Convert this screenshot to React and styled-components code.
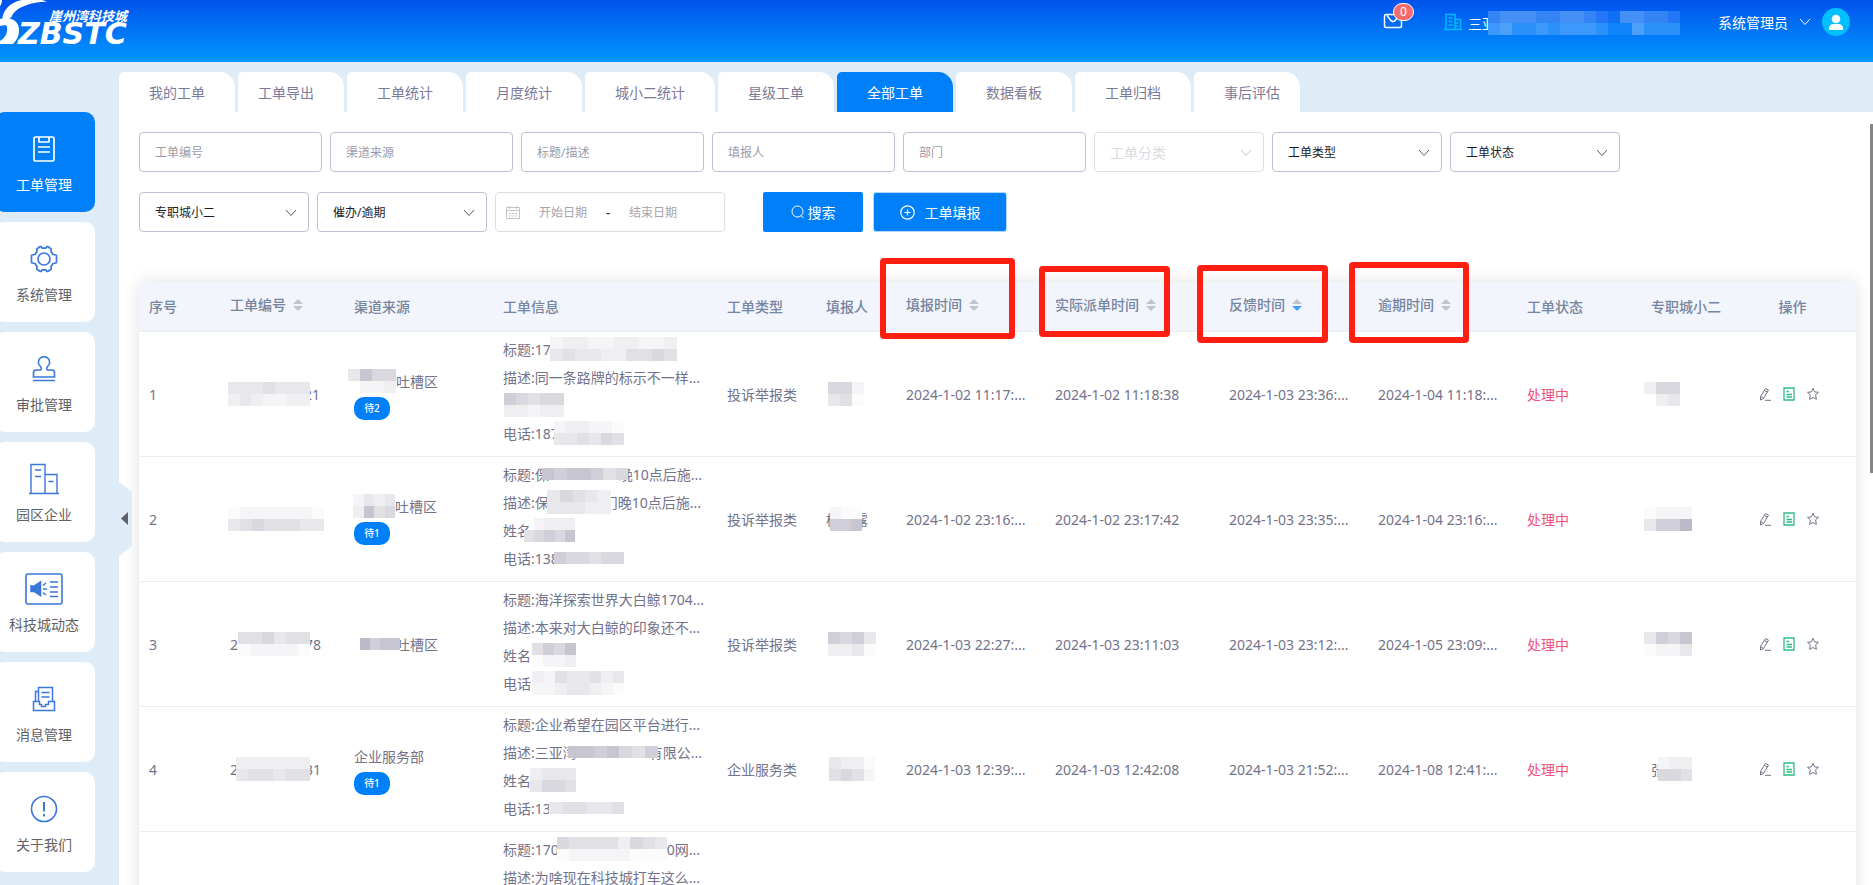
import React from 'react';
import styled, { createGlobalStyle } from 'styled-components';

const tabs = [
  { label: '我的工单' },
  { label: '工单导出', left: 20 },
  { label: '工单统计' },
  { label: '月度统计' },
  { label: '城小二统计' },
  { label: '星级工单' },
  { label: '全部工单', active: true },
  { label: '数据看板' },
  { label: '工单归档' },
  { label: '事后评估', right: 20 },
];

const columns = [
  { label: '序号', width: 81 },
  { label: '工单编号', width: 124, sortable: true },
  { label: '渠道来源', width: 149 },
  { label: '工单信息', width: 224 },
  { label: '工单类型', width: 99 },
  { label: '填报人', width: 80 },
  { label: '填报时间', width: 149, sortable: true, mark: { top: -24, left: -16, width: 135, height: 81 } },
  { label: '实际派单时间', width: 174, sortable: true, mark: { top: -16, left: -6, width: 131, height: 71 } },
  { label: '反馈时间', width: 149, sortable: true, sorted: true, mark: { top: -17, left: -22, width: 131, height: 78 } },
  { label: '逾期时间', width: 149, sortable: true, mark: { top: -20, left: -19, width: 120, height: 81 } },
  { label: '工单状态', width: 124 },
  { label: '专职城小二', width: 88 },
  { label: '操作', width: 127, center: true },
];

// light to dark, indexed by the digits used in the mosaic rows
const greys = ['#fbfbfc', '#f5f5f7', '#efeff2', '#e8e8ec', '#e0e0e5', '#d8d8de', '#d0cfd9', '#c6c5d0', '#bab9c8'];

const m = (width, rows, before = 0, after = 0) => ({ width, rows, before, after });

const orders = [
  {
    id: 1,
    code: [m(82, ['3334333', '2321122'], -2, -6), '21'],
    channel: [m(48, ['3755', '.112'], -6), '吐槽区'],
    waiting: 2,
    info: [
      ['标题:173', m(127, ['1221122112', '3433224454'], -9)],
      ['描述:同一条路牌的标示不一样...'],
      [m(60, ['65455', '22122'], 1)],
      ['电话:187', m(70, ['122110', '334354'], -5)],
    ],
    type: '投诉举报类',
    reporter: [m(36, ['551', '340'], 2)],
    times: ['2024-1-02 11:17:...', '2024-1-02 11:18:38', '2024-1-03 23:36:...', '2024-1-04 11:18:...'],
    owner: [m(36, ['255', '.23'], -7)],
  },
  {
    id: 2,
    code: [m(96, ['01111110', '34544433'], -2)],
    channel: [m(42, ['1323', '2745'], -1), '吐槽区'],
    waiting: 1,
    info: [
      ['标题:保', m(86, ['7677645'], -7, -9), '晚10点后施...'],
      ['描述:保', m(64, ['35432', '33322'], -2, -7), '门晚10点后施...'],
      ['姓名', m(51, ['.1222', '45657'], -7)],
      ['电话:138', m(70, ['655455'], -5)],
    ],
    type: '投诉举报类',
    reporter: ['杨', m(32, ['100', '667'], -10, -8), '露'],
    times: ['2024-1-02 23:16:...', '2024-1-02 23:17:42', '2024-1-03 23:35:...', '2024-1-04 23:16:...'],
    owner: [m(48, ['0111', '3668'], -7)],
  },
  {
    id: 3,
    code: ['2', m(72, ['445344', '011110'], 0, -5), '78'],
    channel: [m(40, ['8677'], 6, -4), '吐槽区'],
    info: [
      ['标题:海洋探索世界大白鲸1704...'],
      ['描述:本来对大白鲸的印象还不...'],
      ['姓名', m(44, ['4657', '0112'], 1)],
      ['电话', m(92, ['21433423', '11233210'], 1)],
    ],
    type: '投诉举报类',
    reporter: [m(48, ['6563', '2230'], 2)],
    times: ['2024-1-03 22:27:...', '2024-1-03 23:11:03', '2024-1-03 23:12:...', '2024-1-05 23:09:...'],
    owner: [m(48, ['3657', '0113'], -7)],
  },
  {
    id: 4,
    code: ['2', m(74, ['222222', '344344'], -2, -5), '31'],
    channel: ['企业服务部'],
    waiting: 1,
    info: [
      ['标题:企业希望在园区平台进行...'],
      ['描述:三亚湾', m(90, ['7767546'], -9, -9), '有限公...'],
      ['姓名', m(46, ['2333', '3554'], -1)],
      ['电话:13', m(75, ['344334'], -2)],
    ],
    type: '企业服务类',
    reporter: [m(46, ['3220', '4541'], 3)],
    times: ['2024-1-03 12:39:...', '2024-1-03 12:42:08', '2024-1-03 21:52:...', '2024-1-08 12:41:...'],
    owner: ['张', m(34, ['122', '554'], -7)],
  },
  {
    id: 5,
    code: [],
    channel: [],
    info: [
      ['标题:170', m(110, ['544442543', '011111000'], -2), '0网...'],
      ['描述:为啥现在科技城打车这么...'],
    ],
    type: '',
    reporter: [],
    times: ['', '', '', ''],
    owner: [],
  },
];

const Mosaic = ({ width, rows, before = 0, after = 0, palette = greys }) => (
  <MosaicSvg
    $before={before}
    $after={after}
    width={width}
    height={rows.length * 12}
    viewBox={`0 0 ${rows[0].length} ${rows.length}`}
    preserveAspectRatio="none"
    shapeRendering="crispEdges"
    aria-hidden="true"
  >
    {rows.map((row, y) => row.split('').map((tone, x) => (
      tone === '.' ? null : <rect key={`${x}-${y}`} x={x} y={y} width="1" height="1" fill={palette[tone]} />
    )))}
  </MosaicSvg>
);

const Parts = ({ items }) => items.map((item, i) => (
  typeof item === 'string' ? <span key={i}>{item}</span> : <Mosaic key={i} {...item} />
));

const Chevron = () => (
  <svg width="12" height="8" viewBox="0 0 12 8" fill="none" stroke="currentColor">
    <path d="M1 1l5 5.5L11 1" />
  </svg>
);

const menu = [
  {
    label: '工单管理',
    active: true,
    icon: (
      <svg width="24" height="28" viewBox="0 0 24 28" strokeWidth="1.7">
        <rect x="2" y="2" width="20" height="24" rx="1.5" />
        <path d="M7 2v5h10V2M6 12h12M6 17h12" />
      </svg>
    ),
  },
  {
    label: '系统管理',
    icon: (
      <svg width="28" height="28" viewBox="0 0 28 28" strokeWidth="1.7">
        <path d="M10 1.200h1.200l1 1.500h3.600l1-1.500H18l3.200 2.200-.2 2.600 1.800 2.800 3.700 1v7.400l-3.700 1L21 21l.2 2.600L18 25.800h-1.200l-1-1.500h-3.600l-1 1.500H10l-3.200-2.200L7 21l-1.800-2.800-3.700-1V9.800l3.700-1L7 6l-.2-2.600z" transform="translate(0 .5)" />
        <circle cx="14" cy="14" r="6" />
      </svg>
    ),
  },
  {
    label: '审批管理',
    icon: (
      <svg width="24" height="26" viewBox="0 0 24 26" strokeWidth="1.6">
        <path d="M1.500 21v-4.500c0-1.500 1-2.500 2.500-2.500h4c1.600 0 1.500-2 .6-3.300a5.600 5.600 0 1 1 6.800 0c-.9 1.300-1 3.300.6 3.300h4c1.500 0 2.500 1 2.500 2.500V21zM1 24.500h22" />
      </svg>
    ),
  },
  {
    label: '园区企业',
    icon: (
      <svg width="32" height="32" viewBox="0 0 32 32" strokeWidth="1.4">
        <path d="M1 30.500h30M3 30V1.500h14V30M17 11.500h12V30M7 7h6M7 13.500h6M20.500 18.500h5" />
      </svg>
    ),
  },
  {
    label: '科技城动态',
    icon: (
      <svg width="38" height="32" viewBox="0 0 38 32" strokeWidth="1.6">
        <rect x="1" y="1" width="36" height="30" rx="2" />
        <path d="M6 13h3.500L15.500 9v13.500l-6-4H6z" fill="currentColor" />
        <path d="M18 12.500l3-2.500M18 16h4M18 19.500l3 2.500M25 9h8M25 14h8M25 19h8M25 23.500h8" />
      </svg>
    ),
  },
  {
    label: '消息管理',
    icon: (
      <svg width="24" height="28" viewBox="0 0 24 28" strokeWidth="1.5">
        <path d="M1.500 16.500v9h21v-9h-6v3h-3v2h-4v-2h-2v-3zM3.500 16V6.500H6M6.500 16V2.500h14V16M9.500 7.500h8M9.500 12h8" />
      </svg>
    ),
  },
  {
    label: '关于我们',
    icon: (
      <svg width="28" height="28" viewBox="0 0 28 28" strokeWidth="1.6">
        <circle cx="14" cy="14" r="12.5" />
        <path d="M14 7v9.500M14 19v2.500" strokeWidth="2" />
      </svg>
    ),
  },
];

const TextFilter = ({ label }) => <FilterInput type="text" placeholder={label} aria-label={label} />;

const SelectFilter = ({ label, disabled }) => (
  <SelectBox $disabled={disabled}>
    <FilterSelect aria-label={label} disabled={disabled}>
      <option>{label}</option>
    </FilterSelect>
    <Chevron />
  </SelectBox>
);

const HeaderCell = ({ column }) => (
  <Th $center={column.center} $sortable={column.sortable} scope="col">
    {column.sortable ? (
      <SortButton type="button">
        {column.label}
        <svg width="10" height="12" viewBox="0 0 10 12" aria-hidden="true">
          <path d="M0 5L5 0l5 5z" fill="#c0c4cc" />
          <path d="M0 7h10l-5 5z" fill={column.sorted ? '#409eff' : '#c0c4cc'} />
        </svg>
      </SortButton>
    ) : column.label}
    {column.mark && <Mark $box={column.mark} />}
  </Th>
);

const OrderRow = ({ order }) => (
  <tr>
    <Td>{order.id}</Td>
    <Td><Line><Parts items={order.code} /></Line></Td>
    <Td>
      <Line $short><Parts items={order.channel} /></Line>
      {order.waiting && <Pill>{`待${order.waiting}`}</Pill>}
    </Td>
    <InfoTd>
      {order.info.map((items, i) => <Line key={i}><Parts items={items} /></Line>)}
    </InfoTd>
    <Td>{order.type}</Td>
    <Td><Line><Parts items={order.reporter} /></Line></Td>
    {order.times.map((time, i) => <Td key={i}>{time}</Td>)}
    <Td $danger>{order.type && '处理中'}</Td>
    <Td><Line><Parts items={order.owner} /></Line></Td>
    <Td>
      <Actions>
        <IconButton type="button" aria-label="编辑">
          <svg width="12" height="14" viewBox="0 0 12 14" fill="none" stroke="currentColor">
            <path d="M6.500 1.500L9.500 3l-5 8.500L1.500 13V9.500zM5.500 3.500l3 1.600M1.500 9.500l3 2M6 13.300h6" />
          </svg>
        </IconButton>
        <IconButton type="button" aria-label="详情" $green>
          <svg width="12" height="14" viewBox="0 0 12 14" fill="none" stroke="currentColor" strokeWidth="1.3">
            <path d="M1 1h10v12H1zM3.500 4.500H6M3.500 7.500h5.500M3.500 10h5.500" />
          </svg>
        </IconButton>
        <IconButton type="button" aria-label="收藏">
          <svg width="12" height="14" viewBox="0 0 12 14" fill="none" stroke="currentColor">
            <path d="M6 1.300l1.600 3.600 3.900.4-2.900 2.600.8 4.400L6 10.500l-3.400 1.800.8-4.400L.5 5.300l3.900-.4z" />
          </svg>
        </IconButton>
      </Actions>
    </Td>
  </tr>
);

const Logo = () => (
  <svg width="140" height="62" viewBox="0 0 140 62" fill="#fff" role="img" aria-label="崖州湾科技城 ZBSTC">
    <path d="M47 1.500C32 2 15 7 11.500 17C9 19 6 20 2.500 20C2 11 10 2 22 0h20z" />
    <path d="M0 6c1-1 2-3 2-6H0z" />
    <path d="M0 19c9-3 19 1 19 11 0 7-3 11-6 14H0v-3c5-3 8-8 7-14-1-3-4-1-7-1z" />
    <text x="49" y="21" fontSize="13" fontWeight="700" fontStyle="italic">崖州湾科技城</text>
    <text x="18" y="44" fontSize="30" fontWeight="700" fontStyle="italic" fontFamily="DejaVu Sans, sans-serif">ZBSTC</text>
  </svg>
);

const App = () => (
  <>
    <GlobalStyle />
    <Page>
      <TopBar>
        <Logo />
        <TopRight>
          <MailButton type="button" aria-label="消息">
            <svg width="20" height="16" viewBox="0 0 20 16" fill="none" stroke="currentColor" strokeWidth="1.5">
              <path d="M3 1.500h14q1.500 0 1.500 1.500v10q0 1.500-1.500 1.500H3q-1.500 0-1.500-1.500V3Q1.500 1.500 3 1.500zM4 2.500l4 5.200q2 1.600 4 0l4-5.200" />
            </svg>
            <Badge>0</Badge>
          </MailButton>
          <Company>
            <svg width="18" height="18" viewBox="0 0 18 18" fill="none" stroke="#00baff" strokeWidth="1.5">
              <path d="M0 16.500h18M2 16V1.500h9V16M11 6.500h5.500V16M4.500 5h4M4.500 8.500h4M4.500 12h4M11 10h3M11 13h3" />
            </svg>
            <CompanyName>
              三亚
              <Mosaic
                width={192}
                before={-8}
                palette={['#0f70f6', '#2278f8', '#3584f6', '#4590f6', '#0f84fa', '#2a90fa', '#3c98fa', '#4ca0fa']}
                rows={['2333223321033221', '6755656665447555']}
              />
            </CompanyName>
          </Company>
          <UserButton type="button">
            系统管理员
            <Chevron />
            <svg width="28" height="28" viewBox="0 0 28 28">
              <circle cx="14" cy="14" r="14" fill="#00bfff" />
              <circle cx="14" cy="11" r="4.3" fill="#fff" />
              <path d="M7 22v-1.500c0-3 2-4.500 4.500-4.500h5c2.500 0 4.500 1.500 4.500 4.500V22z" fill="#fff" />
            </svg>
          </UserButton>
        </TopRight>
      </TopBar>

      <Body>
        <SideNav>
          {menu.map((item) => (
            <SideLink href="#" key={item.label} $active={item.active}>
              <SideIcon>{item.icon}</SideIcon>
              {item.label}
            </SideLink>
          ))}
        </SideNav>

        <Main>
          <Tabs>
            {tabs.map((tab) => (
              <Tab type="button" key={tab.label} $active={tab.active} $left={tab.left} $right={tab.right}>
                {tab.label}
              </Tab>
            ))}
          </Tabs>

          <Panel>
            <CollapseButton type="button" aria-label="收起">
              <svg width="13" height="74" viewBox="0 0 13 74">
                <path d="M0 0l13 10v54L0 74z" fill="#deecf8" />
                <path d="M9 30v13l-7-6.500z" fill="#606266" />
              </svg>
            </CollapseButton>

            <Filters>
              <FilterRow>
                <TextFilter label="工单编号" />
                <TextFilter label="渠道来源" />
                <TextFilter label="标题/描述" />
                <TextFilter label="填报人" />
                <TextFilter label="部门" />
                <SelectFilter label="工单分类" disabled />
                <SelectFilter label="工单类型" />
                <SelectFilter label="工单状态" />
              </FilterRow>
              <FilterRow>
                <SelectFilter label="专职城小二" />
                <SelectFilter label="催办/逾期" />
                <DateRange>
                  <svg width="14" height="14" viewBox="0 0 14 14" fill="none" stroke="#c0c4cc">
                    <path d="M.5 2.500h13v11H.5zM.5 5.500h13M3.500 1v3M10.500 1v3M3 8.500h2M6 8.500h2M9 8.500h2M3 11h2M6 11h2M9 11h2" />
                  </svg>
                  <DateInput placeholder="开始日期" aria-label="开始日期" />
                  <span>-</span>
                  <DateInput placeholder="结束日期" aria-label="结束日期" />
                </DateRange>
                <Buttons>
                  <SearchButton type="submit">
                    <svg width="13" height="14" viewBox="0 0 13 14" fill="none" stroke="currentColor">
                      <circle cx="6.5" cy="6.5" r="5.5" />
                      <path d="M10 10.500l2.500 2.500" />
                    </svg>
                    搜索
                  </SearchButton>
                  <CreateButton type="button">
                    <svg width="15" height="15" viewBox="0 0 15 15" fill="none" stroke="currentColor" strokeWidth="1.2">
                      <circle cx="7.5" cy="7.5" r="6.7" />
                      <path d="M7.500 4.500v6M4.500 7.500h6" />
                    </svg>
                    工单填报
                  </CreateButton>
                </Buttons>
              </FilterRow>
            </Filters>

            <Table>
              <colgroup>
                {columns.map((column) => <col key={column.label} width={column.width} />)}
              </colgroup>
              <thead>
                <tr>
                  {columns.map((column) => <HeaderCell key={column.label} column={column} />)}
                </tr>
              </thead>
              <tbody>
                {orders.map((order) => <OrderRow key={order.id} order={order} />)}
              </tbody>
            </Table>
            <ScrollThumb />
          </Panel>
        </Main>
      </Body>
    </Page>
  </>
);

const GlobalStyle = createGlobalStyle`
  * {
    box-sizing: border-box;
  }

  body {
    margin: 0;
    background: #deecf8;
  }

  body, button, input, select {
    font-family: "Noto Sans", "Noto Sans CJK SC", sans-serif;
    font-size: 14px;
  }

  button {
    padding: 0;
    border: 0;
    background: none;
    color: inherit;
    cursor: pointer;
  }

  svg {
    flex: none;
  }
`;

const Page = styled.div`
  display: flex;
  flex-direction: column;
  height: 100vh;
  overflow: hidden;
`;

const TopBar = styled.header`
  display: flex;
  flex: none;
  justify-content: space-between;
  height: 62px;
  padding-right: 23px;
  background: linear-gradient(#0052ec, #0098ff);
  color: #fff;
`;

const TopRight = styled.div`
  display: flex;
  align-items: center;
  height: 46px;
`;

const MailButton = styled.button`
  position: relative;
  display: flex;
  margin-right: 41px;
  padding-bottom: 4px;
`;

const Badge = styled.span`
  position: absolute;
  top: -10px;
  left: 10px;
  width: 21px;
  height: 18px;
  border: 1px solid #fff;
  border-radius: 9px;
  background: #f56c6c;
  font-size: 12px;
  line-height: 16px;
  text-align: center;
`;

const Company = styled.div`
  display: flex;
  align-items: center;
  gap: 6px;
  margin-right: 38px;
  padding-bottom: 2px;
`;

const CompanyName = styled.span`
  display: flex;
  align-items: center;
  padding-top: 2px;
  white-space: nowrap;
`;

const UserButton = styled.button`
  display: flex;
  align-items: center;
  gap: 11px;
  padding-bottom: 2px;
`;

const Body = styled.div`
  display: flex;
  flex: 1;
  min-height: 0;
`;

const SideNav = styled.nav`
  display: flex;
  flex: none;
  flex-direction: column;
  gap: 10px;
  width: 100px;
  margin-left: -5px;
  margin-right: 24px;
  padding-top: 50px;
`;

const SideLink = styled.a`
  display: flex;
  flex: none;
  flex-direction: column;
  align-items: center;
  gap: 10px;
  height: 100px;
  padding: 21px 2px 0 0;
  border-radius: 10px;
  background: ${({ $active }) => ($active ? '#0080f8' : '#fff')};
  color: ${({ $active }) => ($active ? '#fff' : '#606266')};
  line-height: 20px;
  text-decoration: none;

  svg {
    color: ${({ $active }) => ($active ? '#fff' : '#3a78dc')};
    fill: none;
    stroke: currentColor;
  }
`;

const SideIcon = styled.span`
  display: flex;
  align-items: center;
  justify-content: center;
  height: 32px;
`;

const Main = styled.main`
  display: flex;
  flex: 1;
  flex-direction: column;
  min-width: 0;
  padding-top: 10px;
`;

const Tabs = styled.div`
  display: flex;
  flex: none;
  gap: 3px;
`;

const Tab = styled.button`
  height: 40px;
  padding-left: ${({ $left }) => $left || 30}px;
  padding-right: ${({ $right }) => $right || 30}px;
  border-radius: 5px 15px 0 0;
  background: ${({ $active }) => ($active ? '#0080f8' : '#fff')};
  color: ${({ $active }) => ($active ? '#fff' : '#7c7a98')};
  white-space: nowrap;
`;

const Panel = styled.section`
  position: relative;
  flex: 1;
  min-height: 0;
  padding: 20px 17px 0 20px;
  background: #fff;
`;

const CollapseButton = styled.button`
  position: absolute;
  top: 370px;
  left: 0;
  display: flex;
`;

const ScrollThumb = styled.div`
  position: absolute;
  top: 12px;
  right: 0;
  width: 3px;
  height: 349px;
  background: #868686;
`;

const Filters = styled.form`
  display: flex;
  flex-direction: column;
  gap: 20px;
  margin-bottom: 50px;
`;

const FilterRow = styled.div`
  display: flex;
  gap: 8px;
`;

const FilterInput = styled.input`
  width: 183px;
  height: 40px;
  padding: 0 15px;
  border: 1px solid #c0bfd5;
  border-radius: 4px;
  font-size: 12px;

  &::placeholder {
    color: #9b9bab;
  }
`;

const SelectBox = styled.div`
  position: relative;
  width: 170px;
  height: 40px;
  border: 1px solid ${({ $disabled }) => ($disabled ? '#dddde6' : '#c0bfd5')};
  border-radius: 4px;
  color: ${({ $disabled }) => ($disabled ? '#c8c8d0' : '#5a5a68')};

  svg {
    position: absolute;
    top: 16px;
    right: 11px;
    pointer-events: none;
  }
`;

const FilterSelect = styled.select`
  width: 100%;
  height: 100%;
  padding: 0 15px;
  border: 0;
  background: none;
  appearance: none;
  color: #1c1c28;
  font-size: 12px;

  &:disabled {
    color: #dadae2;
    font-size: 14px;
    opacity: 1;
  }
`;

const DateRange = styled.div`
  display: flex;
  align-items: center;
  width: 230px;
  height: 40px;
  padding: 0 30px 0 10px;
  border: 1px solid #dddde6;
  border-radius: 4px;
  color: #303133;

  svg {
    margin-right: 2px;
  }

  span {
    flex: none;
    width: 8px;
    text-align: center;
  }
`;

const DateInput = styled.input`
  flex: 1;
  min-width: 0;
  padding: 0;
  border: 0;
  font-size: 12px;
  text-align: center;

  &::placeholder {
    color: #a4a4b0;
  }
`;

const Buttons = styled.div`
  display: flex;
  gap: 10px;
  margin-left: 30px;
`;

const SearchButton = styled.button`
  display: flex;
  align-items: center;
  justify-content: center;
  gap: 4px;
  width: 100px;
  height: 40px;
  border-radius: 2px;
  background: #0080f8;
  color: #fff;
`;

const CreateButton = styled(SearchButton)`
  gap: 10px;
  width: 134px;
  border: 1px solid #b3d8ff;
  border-radius: 3px;
`;

const Table = styled.table`
  width: 100%;
  border-collapse: separate;
  border-spacing: 0;
  table-layout: fixed;
  background: #fff;
  box-shadow: 0 0 16px rgba(0, 0, 0, 0.12);
  color: #737289;
`;

const Th = styled.th`
  position: relative;
  height: 50px;
  padding: 0 10px ${({ $sortable }) => ($sortable ? 4 : 0)}px;
  border-bottom: 1px solid #ebeef5;
  background: #f2f5fc;
  color: #75859f;
  font-weight: 500;
  line-height: 20px;
  text-align: ${({ $center }) => ($center ? 'center' : 'left')};
  white-space: nowrap;
`;

const SortButton = styled.button`
  display: flex;
  align-items: center;
  gap: 7px;
  font-weight: 500;
  line-height: 20px;
`;

const Mark = styled.span`
  position: absolute;
  z-index: 1;
  top: ${({ $box }) => $box.top}px;
  left: ${({ $box }) => $box.left}px;
  width: ${({ $box }) => $box.width}px;
  height: ${({ $box }) => $box.height}px;
  border: 6px solid #ff1e12;
  border-radius: 4px;
  pointer-events: none;
`;

const Td = styled.td`
  height: 125px;
  padding: 0 10px;
  border-bottom: 1px solid #ebeef5;
  color: ${({ $danger }) => ($danger ? '#f0507e' : 'inherit')};
  white-space: nowrap;
`;

const InfoTd = styled(Td)`
  padding: 3px 10px 9px;
  vertical-align: top;
`;

const Line = styled.div`
  display: flex;
  align-items: center;
  height: ${({ $short }) => ($short ? 24 : 28)}px;
`;

const MosaicSvg = styled.svg`
  position: relative;
  margin-left: ${({ $before }) => $before}px;
  margin-right: ${({ $after }) => $after}px;
`;

const Pill = styled.span`
  display: block;
  width: 36px;
  height: 23px;
  margin-top: 4px;
  border-radius: 10px;
  background: #0080f8;
  color: #fff;
  font-size: 10px;
  font-weight: 500;
  line-height: 23px;
  text-align: center;
`;

const Actions = styled.div`
  display: flex;
  justify-content: center;
  gap: 12px;
  padding-right: 8px;
`;

const IconButton = styled.button`
  display: flex;
  color: ${({ $green }) => ($green ? '#2fbd85' : '#737289')};
`;

export default App;
